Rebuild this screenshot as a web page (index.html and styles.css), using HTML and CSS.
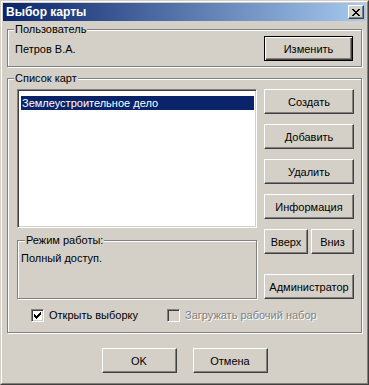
FILE: index.html
```html
<!DOCTYPE html>
<html lang="ru">
<head>
  <meta charset="UTF-8">
  <title>Выбор карты</title>
  <link rel="stylesheet" href="styles.css">
</head>
<body>
  <div class="window">
    <div class="frame">
      <div class="titlebar">
        <span class="title">Выбор карты</span>
        <span class="close">
          <svg width="8" height="7" viewBox="0 0 8 7">
            <path d="M0 0h2v1h-2zM6 0h2v1h-2zM1 1h2v1h-2zM5 1h2v1h-2zM2 2h4v1h-4zM3 3h2v1h-2zM2 4h4v1h-4zM1 5h2v1h-2zM5 5h2v1h-2zM0 6h2v1h-2zM6 6h2v1h-2z" fill="#000"/>
          </svg>
        </span>
      </div>

      <div class="group user-group">
        <span class="legend">Пользователь</span>
        <div class="user-row">
          <span class="user-name">Петров В.А.</span>
          <button class="btn default btn-change">Изменить</button>
        </div>
      </div>

      <div class="group maps-group">
        <span class="legend">Список карт</span>
        <div class="maps-main">
          <div class="left-col">
            <div class="listbox">
              <div class="item selected">Землеустроительное дело</div>
            </div>
            <div class="group mode-group">
              <span class="legend">Режим работы:</span>
              <div class="mode-text">Полный доступ.</div>
            </div>
          </div>
          <div class="right-col">
            <button class="btn side">Создать</button>
            <button class="btn side">Добавить</button>
            <button class="btn side">Удалить</button>
            <button class="btn side">Информация</button>
            <div class="move-row">
              <button class="btn up">Вверх</button>
              <button class="btn down">Вниз</button>
            </div>
            <button class="btn side admin">Администратор</button>
          </div>
        </div>
        <div class="checks">
          <label class="check">
            <span class="box">
              <svg width="7" height="7" viewBox="0 0 7 7">
                <path d="M6 0h1v3h-1zM5 1h1v3h-1zM4 2h1v3h-1zM3 3h1v3h-1zM2 4h1v3h-1zM1 3h1v3h-1zM0 2h1v3h-1z" fill="#000"/>
              </svg>
            </span>
            Открыть выборку
          </label>
          <label class="check disabled">
            <span class="box"></span>
            Загружать рабочий набор
          </label>
        </div>
      </div>

      <div class="dialog-buttons">
        <button class="btn dialog">OK</button>
        <button class="btn dialog">Отмена</button>
      </div>
    </div>
  </div>
</body>
</html>
```

FILE: styles.css
```css
body {
  margin: 0;
  background: #d4d0c8;
  font-family: "Liberation Sans", Arial, sans-serif;
  font-size: 11px;
  color: #000;
}

.window {
  width: 369px;
  height: 385px;
  box-sizing: border-box;
  border: 1px solid;
  border-color: #d4d0c8 #404040 #404040 #d4d0c8;
  background: #d4d0c8;
}

.frame {
  height: 100%;
  box-sizing: border-box;
  border: 1px solid;
  border-color: #fff #808080 #808080 #fff;
  padding: 1px;
}

.titlebar {
  height: 18px;
  display: flex;
  align-items: center;
  justify-content: space-between;
  padding: 0 2px 0 3px;
  background: linear-gradient(to right, #0a246a, #a6caf0);
}

.title {
  color: #fff;
  font-weight: bold;
  font-size: 12px;
}

.close {
  width: 16px;
  height: 14px;
  box-sizing: border-box;
  display: flex;
  align-items: center;
  justify-content: center;
  background: #d4d0c8;
  border: 1px solid;
  border-color: #fff #404040 #404040 #fff;
  box-shadow: inset -1px -1px #808080;
}

.group {
  position: relative;
  border: 1px solid #808080;
  box-shadow: inset 1px 1px #fff, 1px 1px #fff;
}

.legend {
  position: absolute;
  top: -7px;
  left: 6px;
  padding: 0 1px;
  line-height: 13px;
  background: #d4d0c8;
}

.btn {
  font-family: "Liberation Sans", Arial, sans-serif;
  font-size: 11px;
  color: #000;
  background: #d4d0c8;
  border: 1px solid;
  border-color: #fff #404040 #404040 #fff;
  box-shadow: inset -1px -1px #808080;
  height: 25px;
  padding: 0;
  box-sizing: border-box;
}

.btn.default {
  border-color: #000;
  box-shadow: inset 1px 1px #fff, inset -1px -1px #404040, inset -2px -2px #808080;
}

.user-group {
  margin: 8px 4px 0;
  height: 38px;
  box-sizing: border-box;
  padding: 6px 8px 0 7px;
}

.user-row {
  display: flex;
  align-items: center;
  justify-content: space-between;
}

.btn-change {
  width: 89px;
}

.maps-group {
  margin: 11px 4px 0;
  height: 255px;
  box-sizing: border-box;
  padding: 10px 7px 0 9px;
}

.maps-main {
  display: flex;
  gap: 7px;
}

.left-col {
  width: 240px;
}

.listbox {
  height: 139px;
  box-sizing: border-box;
  background: #fff;
  border: 1px solid;
  border-color: #808080 #fff #fff #808080;
  box-shadow: inset 1px 1px #404040, inset -1px -1px #d4d0c8;
  padding: 6px 2px 0 3px;
}

.item {
  height: 14px;
  line-height: 14px;
  padding-left: 1px;
}

.item.selected {
  background: #0a246a;
  color: #fff;
}

.mode-group {
  margin-top: 12px;
  height: 59px;
  box-sizing: border-box;
  padding: 11px 3px 0 3px;
}

.mode-group .legend {
  left: 7px;
}

.right-col {
  width: 90px;
  display: flex;
  flex-direction: column;
  gap: 10px;
}

.side {
  width: 90px;
}

.move-row {
  display: flex;
  justify-content: space-between;
}

.up {
  width: 44px;
}

.down {
  width: 43px;
}

.admin {
  margin-top: 10px;
}

.checks {
  display: flex;
  margin-top: 10px;
  padding-left: 14px;
}

.check {
  display: flex;
  align-items: center;
  gap: 5px;
  line-height: 13px;
}

.check.disabled {
  margin-left: 29px;
  color: #808080;
  text-shadow: 1px 1px #fff;
}

.box {
  width: 13px;
  height: 13px;
  box-sizing: border-box;
  display: flex;
  align-items: center;
  justify-content: center;
  background: #fff;
  border: 1px solid;
  border-color: #808080 #fff #fff #808080;
  box-shadow: inset 1px 1px #404040, inset -1px -1px #d4d0c8;
}

.check.disabled .box {
  background: #d4d0c8;
}

.dialog-buttons {
  display: flex;
  justify-content: center;
  gap: 16px;
  margin-top: 15px;
}

.dialog {
  width: 75px;
}
```
